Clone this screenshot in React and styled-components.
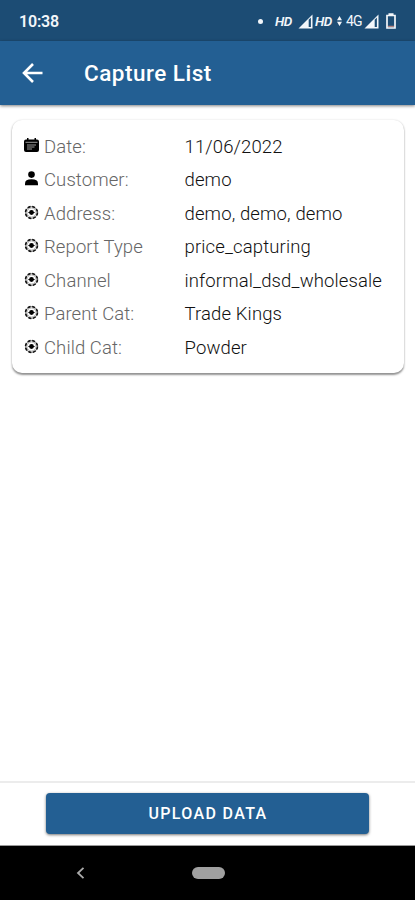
import React from 'react';
import styled, { createGlobalStyle } from 'styled-components';

const GlobalStyle = createGlobalStyle`
  * {
    box-sizing: border-box;
  }

  body {
    margin: 0;
    background: #fff;
    font-family: Roboto, sans-serif;
  }
`;

const Screen = styled.div`
  width: 415px;
  height: 900px;
  display: flex;
  flex-direction: column;
  background: #fff;
  overflow: hidden;
`;

const StatusBar = styled.div`
  height: 41px;
  flex: none;
  display: flex;
  align-items: center;
  justify-content: space-between;
  padding: 1px 19px 0 19px;
  background: #1c4c74;
  color: #f2f6fa;
`;

const Clock = styled.span`
  font-size: 16px;
  font-weight: 600;
  letter-spacing: -0.2px;
`;

const StatusIcons = styled.div`
  display: flex;
  align-items: center;
  height: 18px;
`;

const Dot = styled.span`
  width: 5px;
  height: 5px;
  margin-right: 12px;
  border-radius: 50%;
  background: #f2f6fa;
`;

const Hd = styled.span`
  width: 18px;
  margin-right: ${(props) => props.$gap}px;
  font-size: 13.5px;
  font-weight: 600;
  font-style: italic;
  letter-spacing: -0.5px;
`;

const Network = styled.span`
  width: 16px;
  margin-right: 2px;
  font-size: 14px;
  letter-spacing: -0.9px;
`;

const StatusSvg = styled.svg`
  display: block;
  flex: none;
  margin-top: ${(props) => props.$drop || 0}px;
  margin-right: ${(props) => props.$gap || 0}px;
`;

const Toolbar = styled.header`
  position: relative;
  height: 64px;
  flex: none;
  display: flex;
  align-items: center;
  padding-left: 20px;
  background: #235f93;
  box-shadow: 0 1px 3px rgba(0, 0, 0, 0.5);
`;

const BackIcon = styled.svg`
  width: 26px;
  height: 26px;
  margin-right: 38px;
`;

const Title = styled.h1`
  margin: 0;
  color: #fff;
  font-size: 22.5px;
  font-weight: 500;
  letter-spacing: 0.5px;
`;

const Content = styled.main`
  flex: 1;
  padding: 15px 11px 0 12px;
`;

const Card = styled.section`
  height: 253px;
  padding: 10px 12px 0;
  border-radius: 10px;
  background: #fff;
  box-shadow: 0 1.5px 2px rgba(0, 0, 0, 0.42), 0 0 3px rgba(0, 0, 0, 0.06);
`;

const Row = styled.div`
  height: 33.5px;
  display: flex;
  align-items: center;
  white-space: nowrap;
`;

const RowIcon = styled.svg`
  width: 15px;
  height: 15px;
  flex: none;
  margin: 0 5px 3px 0;
`;

const Label = styled.span`
  width: 140.5px;
  flex: none;
  color: #666;
  font-size: 18.5px;
  font-weight: 300;
  letter-spacing: 0.1px;
`;

const Value = styled.span`
  color: #111;
  font-size: 18.5px;
  font-weight: 300;
  letter-spacing: 0.13px;
`;

const Footer = styled.footer`
  height: 65px;
  flex: none;
  padding-top: 10px;
  border-top: 2px solid #ececec;
  border-bottom: 1px solid #999;
`;

const UploadButton = styled.button`
  display: block;
  width: 323px;
  height: 41px;
  margin: 0 0 0 46px;
  padding: 0 0 0 1px;
  border: 0;
  border-radius: 4px;
  background: #235f93;
  box-shadow: 0 1px 3px rgba(0, 0, 0, 0.55);
  color: #fff;
  font-family: inherit;
  font-size: 16px;
  font-weight: 500;
  letter-spacing: 1.35px;
`;

const NavBar = styled.nav`
  height: 54px;
  flex: none;
  display: flex;
  align-items: center;
  padding-left: 76px;
  background: #000;
`;

const HomePill = styled.span`
  width: 33px;
  height: 12px;
  margin-left: 106.5px;
  border-radius: 6px;
  background: #a0a0a0;
`;

const Signal = ({ gap }) => (
  <StatusSvg width="15" height="15" viewBox="0 0 15 15" $gap={gap} $drop={1}>
    <path d="M0.5 14.5 14.5 0.5V14.5Z" fill="#f2f6fa" />
    <path d="M10.7 5.8 12.9 3.6V13H10.7Z" fill="#1c4c74" />
  </StatusSvg>
);

const CalendarIcon = () => (
  <RowIcon viewBox="0 0 15 15">
    <path d="M2 1.5H3V0H4.5V1.5H10.5V0H12V1.5H13Q15 1.5 15 3.5V12Q15 14 13 14H2Q0 14 0 12V3.5Q0 1.5 2 1.5Z" />
    <path d="M1.5 4.3H13.5" stroke="#aaa" strokeWidth="0.9" />
    <path d="M3 7H12M3 9H10.5M3 11H8" stroke="#aaa" strokeWidth="0.9" />
  </RowIcon>
);

const PersonIcon = () => (
  <RowIcon viewBox="0 0 15 15">
    <circle cx="7.5" cy="3.6" r="3.3" />
    <path d="M1 14.2V12.4Q1 8.3 7.5 8.3T14 12.4V14.2Z" />
  </RowIcon>
);

const GearIcon = () => (
  <RowIcon viewBox="0 0 15 15">
    <circle cx="7.5" cy="7.5" r="5.9" fill="none" stroke="#777" strokeWidth="1" />
    <circle cx="7.5" cy="7.5" r="5.9" fill="none" stroke="#111" strokeWidth="1.7" strokeDasharray="2.9 1.73" />
    <circle cx="7.5" cy="7.5" r="4.6" fill="none" stroke="#999" strokeWidth="0.8" />
    <circle cx="7.5" cy="7.5" r="2.4" />
    <path d="M4.4 7.5H10.6" stroke="#000" strokeWidth="1" />
  </RowIcon>
);

const rows = [
  { label: 'Date:', value: '11/06/2022', icon: CalendarIcon },
  { label: 'Customer:', value: 'demo', icon: PersonIcon },
  { label: 'Address:', value: 'demo, demo, demo', icon: GearIcon },
  { label: 'Report Type', value: 'price_capturing', icon: GearIcon },
  { label: 'Channel', value: 'informal_dsd_wholesale', icon: GearIcon },
  { label: 'Parent Cat:', value: 'Trade Kings', icon: GearIcon },
  { label: 'Child Cat:', value: 'Powder', icon: GearIcon },
];

const App = () => {
  return (
    <Screen>
      <GlobalStyle />
      <StatusBar>
        <Clock>10:38</Clock>
        <StatusIcons>
          <Dot />
          <Hd $gap={5}>HD</Hd>
          <Signal gap={2} />
          <Hd $gap={4}>HD</Hd>
          <StatusSvg width="5" height="12" viewBox="0 0 6 12" $gap={4}>
            <path d="M3 0 6 5H0ZM3 12 0 7H6Z" fill="#f2f6fa" />
          </StatusSvg>
          <Network>4G</Network>
          <Signal gap={7} />
          <StatusSvg width="10" height="16" viewBox="0 0 10 16">
            <path d="M3.3 2V1H6.7V2M1 2.5H9V15H1Z" fill="none" stroke="#f2f6fa" strokeWidth="1.7" />
            <path d="M2 13.3H8" stroke="#d88f82" strokeWidth="1" />
          </StatusSvg>
        </StatusIcons>
      </StatusBar>
      <Toolbar>
        <BackIcon viewBox="0 0 26 26">
          <path d="M22.5 13H4M13 4 4 13 13 22" fill="none" stroke="#fff" strokeWidth="2.6" />
        </BackIcon>
        <Title>Capture List</Title>
      </Toolbar>
      <Content>
        <Card>
          {rows.map(({ label, value, icon: Icon }) => (
            <Row key={label}>
              <Icon />
              <Label>{label}</Label>
              <Value>{value}</Value>
            </Row>
          ))}
        </Card>
      </Content>
      <Footer>
        <UploadButton>UPLOAD DATA</UploadButton>
      </Footer>
      <NavBar>
        <svg width="9" height="14" viewBox="0 0 9 14">
          <path d="M7.5 1.8 2 7 7.5 12.2" fill="none" stroke="#aaa" strokeWidth="1.8" />
        </svg>
        <HomePill />
      </NavBar>
    </Screen>
  );
};

export default App;
